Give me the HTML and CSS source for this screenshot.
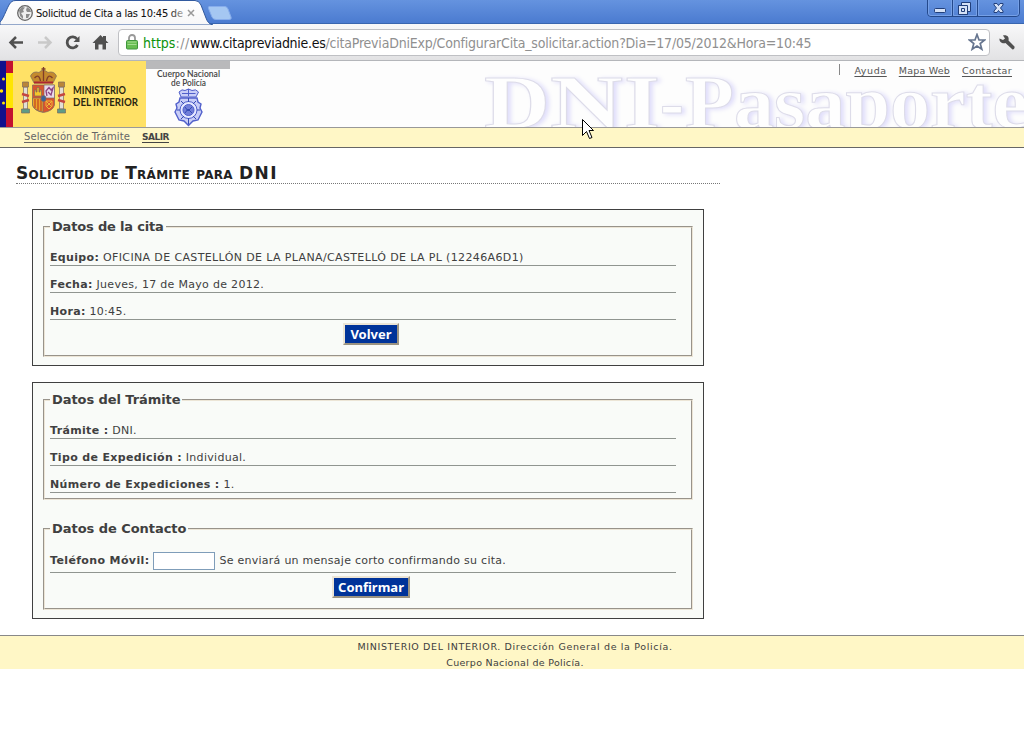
FILE: index.html
```html
<!DOCTYPE html>
<html lang="es">
<head>
<meta charset="utf-8">
<title>Solicitud de Cita a las 10:45</title>
<link rel="stylesheet" href="styles.css">
</head>
<body>
<div class="tabstrip">
  <svg class="tabs" width="240" height="25" viewBox="0 0 240 25">
    <defs>
      <linearGradient id="tabfill" x2="0" y2="1"><stop stop-color="#fff"/><stop offset="1" stop-color="#f7f7f8"/></linearGradient>
      <linearGradient id="fade" x1="170" x2="184" gradientUnits="userSpaceOnUse"><stop stop-color="#111"/><stop offset="1" stop-color="#bbb"/></linearGradient>
    </defs>
    <path d="M0 25V22C4 19 8 3 12 1.500Q13 .5 16 .5H195Q199 .5 201 5L206 18Q208 24 213 25Z" fill="url(#tabfill)" stroke="#31599e"/>
    <path d="M209 6.500H225Q227 6.500 228 9L231 17Q232 19.500 229 19.500H216Q213 19.500 212 17L208.500 8.500Q208 6.500 209 6.500Z" fill="#a5c7f2" stroke="#87adec"/>
    <circle cx="25" cy="13" r="7.300" fill="#eee" stroke="#666" stroke-width="1.300"/>
    <path d="M19 10L22 7 25 7.500 23 10 24 12 21 13 23 16 23 19 20 16ZM27 7L30 9 31 12 27 12 26 10ZM26 14L30 14 28 18 26 18Z" fill="#8c8c8c"/>
    <text x="36" y="17" class="tab-title" textLength="147" fill="url(#fade)">Solicitud de Cita a las 10:45 de</text>
    <path d="M188 10L194 16M194 10L188 16" stroke="#999" stroke-width="1.500"/>
  </svg>
  <svg class="winbtns" width="94" height="18" viewBox="0 0 94 18">
    <path d="M.5 0V13Q.5 16.500 4 16.500H89Q92.500 16.500 92.500 13V0M25.500 0V16M50.500 0V16" fill="none" stroke="#24498c"/>
    <path d="M1.500 0V13Q1.500 15.500 4 15.500H24.500V0M26.500 0V15.500H49.500V0M51.500 0V15.500H89Q91.500 15.500 91.500 13V0" fill="none" stroke="#76a0e6"/>
    <rect x="7.500" y="8.500" width="11" height="4" rx="1" fill="#d5e1f6" stroke="#213f7b"/>
    <path d="M34.500 2.500H43.500V11.500H40.500V14.500H31.500V5.500H34.500Z" fill="#d5e1f6" stroke="#213f7b"/>
    <path d="M31.500 5.500H40.500V14.500M34.500 8.500H37.500V11.500H34.500Z" fill="none" stroke="#213f7b"/>
    <path d="M67 3.500H70L71.500 5.500 73 3.500H76V5L73.500 8 76 11V12.500H73L71.500 10.500 70 12.500H67V11L69.500 8 67 5Z" fill="#d5e1f6" stroke="#213f7b"/>
  </svg>
</div>
<div class="toolbar">
  <svg class="navicons" width="118" height="36" viewBox="0 24 118 36">
    <g fill="none" stroke-width="2.500">
      <path d="M10.500 42.500H23M16 37L10.500 42.500 16 48" stroke="#505050"/>
      <path d="M38 42.500H50M45 37L50.500 42.500 45 48" stroke="#c9c9c9"/>
      <path d="M77 39A5.500 5.500 0 1 0 77.500 45" stroke="#505050" stroke-width="2.800"/>
    </g>
    <path d="M79.500 36V42H73.500Z" fill="#505050"/>
    <path d="M92.500 43L100.500 35 103 37.500V36H106V40.500L108.500 43H106V49.500H102.500V44.500H98.500V49.500H95V43Z" fill="#505050"/>
  </svg>
  <div class="omnibox">
    <svg width="12" height="16" viewBox="0 0 12 16">
      <path d="M3 7V4A3 3 0 0 1 9 4V7" fill="none" stroke="#999" stroke-width="1.800"/>
      <rect x=".5" y="6.500" width="11" height="8.500" rx="1" fill="#68bd52" stroke="#3f963c"/>
      <path d="M1.500 8H10.500M1.500 10.500H10.500" stroke="#a4dd91"/>
    </svg>
    <div class="url"><span class="scheme">https</span><span class="sep">://</span><span class="host">www.citapreviadnie.es</span><span class="path">/citaPreviaDniExp/ConfigurarCita_solicitar.action?Dia=17/05/2012&amp;Hora=10:45</span></div>
    <svg class="star" width="18" height="18" viewBox="0 0 18 18"><path d="M9 1.500L11 7H16.500L12.200 10.500 13.800 16.200 9 13 4.200 16.200 5.800 10.500 1.500 7H7Z" fill="#fff" stroke="#66758f" stroke-width="1.700"/></svg>
  </div>
  <svg class="wrench" width="18" height="18" viewBox="0 0 18 18"><path d="M1.500 4.500L5 6 7 4.500 5 1.500C9 .5 11.500 3 10.500 6.500L16.500 12.500Q17 15 14.500 15.500L7.500 9C4.500 10 1 8 1.500 4.500Z" fill="#505050"/></svg>
</div>
<header class="banner">
  <svg class="crest" width="146" height="66" viewBox="0 61 146 66">
    <rect y="61" width="146" height="66" fill="#ffe166"/>
    <rect y="61" width="13" height="66" fill="#c3122f"/>
    <rect x="6" y="73" width="7" height="35" fill="#ffe500"/>
    <rect y="61" width="6" height="66" fill="#10108c"/>
    <g fill="#ffe500"><circle cx="3.500" cy="79" r="1.500"/><circle cx="1.500" cy="91" r="1.700"/><circle cx="3.500" cy="103" r="1.500"/></g>
    <g stroke="#7b6a60" stroke-width=".7">
      <path d="M23.500 87H27.500V109H23.500ZM59.500 87H63.500V109H59.500Z" fill="#e3dfd5"/>
      <path d="M22.500 82H28.500V87H22.500ZM58.500 82H64.500V87H58.500Z" fill="#b98539"/>
      <path d="M21.500 109H29.500V113H21.500ZM57.500 109H65.500V113H57.500Z" fill="#5f9b86"/>
      <path d="M22 94L29 96M22 102L29 100M58 96L65 94M58 100L65 102" stroke="#c4473f" stroke-width="2.500"/>
      <path d="M32.500 85H54.500V105Q53 111 43.500 112.500Q34 111 32.500 105Z" fill="#d9542f"/>
      <path d="M44 85H54.500V98H44Z" fill="#e9d8e8"/>
      <path d="M32.500 98H43V112Q33.500 110 32.500 105Z" fill="#eba52b"/>
      <path d="M34.500 96V90H36V92H37V87.500H39V92H40V90H41.500V96Z" fill="#f5c62a"/>
      <path d="M35 99V108M38 99V110M41 99V111" stroke="#c64a20" stroke-width="1.300"/>
      <path d="M47 96L46 91 49 87.500 51 90 53 88 51 95 48 92" stroke="#8b4282" stroke-width="1.300" fill="none"/>
      <path d="M46 101H52V106L49 109 46 106ZM46 101L52 107M52 101L46 107" stroke="#edb838" stroke-width="1" fill="none"/>
      <ellipse cx="43.500" cy="98.500" rx="2.500" ry="3" fill="#3d6399"/>
      <path d="M34 83L30.500 76Q33 70.500 39 72.500Q43 68 48 72.500Q54 70.500 56.500 76L53 83Z" fill="#c48a2e"/>
      <path d="M34 82.500H53" stroke="#ac2630" stroke-width="2"/>
      <path d="M34.500 78Q39 73 40.500 81M46.500 81Q48 73 52.500 78M43.500 67V81M41.500 69H45.500" stroke="#813d28" stroke-width="1.300" fill="none"/>
    </g>
    <text x="73" y="94" class="ministry" textLength="53" lengthAdjust="spacingAndGlyphs">MINISTERIO</text>
    <text x="73" y="106" class="ministry" textLength="65" lengthAdjust="spacingAndGlyphs">DEL INTERIOR</text>
  </svg>
  <svg class="police" width="84" height="66" viewBox="146 61 84 66">
    <rect x="146" y="61" width="84" height="8" fill="#b9b9bb"/>
    <text x="157" y="77" class="corps" textLength="63" lengthAdjust="spacingAndGlyphs">Cuerpo Nacional</text>
    <text x="171" y="86" class="corps" textLength="35" lengthAdjust="spacingAndGlyphs">de Policía</text>
    <g fill="#c9cef7" stroke="#5160cb">
      <path d="M181 97L179 92Q182 88.500 185 90.500Q188.500 87.500 192 90.500Q196 88.500 198.500 92L196 97Z"/>
      <path d="M188.500 89V96M182 93.500H195.500" fill="none"/>
      <path d="M180 98H197L198 102 201 104 200 108 202 112 200 116 198 120 193 121 188.500 125.500 184 121 179 120 177 116 175 112 177 108 176 104 179 102Z" stroke-width="1.400"/>
      <circle cx="188.500" cy="110" r="8.500" fill="#e5e8ff"/>
      <circle cx="188.500" cy="110" r="5.500" fill="#727fd9"/>
      <path d="M185 107L188 111 192 107M185 113L188 109 192 113M181 101L184 104M196 101L193 104M181 119L184 116M196 119L193 116M188.500 98V102M177 110H180M197 110H200M188.500 118V124" fill="none" stroke="#354bb3"/>
    </g>
  </svg>
  <svg class="watermark" width="545" height="66" viewBox="479 61 545 66">
    <g class="ghost">
      <text x="484" y="128" textLength="66" lengthAdjust="spacingAndGlyphs">D</text>
      <text x="550" y="128" textLength="73" lengthAdjust="spacingAndGlyphs">N</text>
      <text x="624" y="128" textLength="36" lengthAdjust="spacingAndGlyphs">I</text>
      <text x="660" y="128" textLength="24" lengthAdjust="spacingAndGlyphs">-</text>
      <text x="685" y="128" textLength="343" lengthAdjust="spacingAndGlyphs">Pasaporte</text>
    </g>
  </svg>
  <nav class="toplinks"><a class="help">Ayuda</a><a class="map">Mapa Web</a><a class="reach">Contactar</a></nav>
</header>
<nav class="menu"><a class="select">Selección de Trámite</a><a class="exit">SALIR</a></nav>
<main>
  <h1>Solicitud de Trámite para <span>DNI</span></h1>
  <section class="box">
    <fieldset class="appointment">
      <legend class="l1">Datos de la cita</legend>
      <div class="row"><b>Equipo:</b> <span class="office">OFICINA DE CASTELLÓN DE LA PLANA/CASTELLÓ DE LA PL (12246A6D1)</span></div>
      <div class="row"><b>Fecha:</b> <span>Jueves, 17 de Mayo de 2012.</span></div>
      <div class="row"><b>Hora:</b> <span>10:45.</span></div>
      <button class="back">Volver</button>
    </fieldset>
  </section>
  <section class="box">
    <fieldset class="procedure">
      <legend class="l2">Datos del Trámite</legend>
      <div class="row"><b>Trámite :</b> <span>DNI.</span></div>
      <div class="row"><b>Tipo de Expedición :</b> <span>Individual.</span></div>
      <div class="row"><b>Número de Expediciones :</b> <span>1.</span></div>
    </fieldset>
    <fieldset class="contact">
      <legend class="l3">Datos de Contacto</legend>
      <div class="row phone"><b>Teléfono Móvil:</b><input type="text"><span>Se enviará un mensaje corto confirmando su cita.</span></div>
      <button class="confirm">Confirmar</button>
    </fieldset>
  </section>
</main>
<footer><div class="f1">MINISTERIO DEL INTERIOR. Dirección General de la Policía.</div><div class="f2">Cuerpo Nacional de Policía.</div></footer>
<svg class="cursor" width="13" height="22" viewBox="0 0 13 22"><path d="M.5 .5V16.500L4.500 12.500 7.500 19.500 10 18.500 7 11.500H11.500Z" fill="#fff" stroke="#000"/></svg>
</body>
</html>
```
FILE: styles.css
```css
* { box-sizing: border-box; }
body { margin: 0; width: 1024px; height: 738px; overflow: hidden; background: #fff; color: #404040; font: 11px/14px "DejaVu Sans", Verdana, sans-serif; }
svg { display: block; flex: none; }
.tabstrip { height: 24px; display: flex; justify-content: space-between; background: linear-gradient(#6593df, #4b7bd0); padding-right: 3px; border-bottom: 1px solid #3966af; }
.tab-title { font: 11px "DejaVu Sans Condensed", "DejaVu Sans", sans-serif; }
.toolbar { height: 37px; display: flex; background: linear-gradient(#f8f8f9, #e2e2e4); border-bottom: 1px solid #b4b6ba; }
.omnibox { width: 872px; height: 27px; margin-top: 5px; border: 1px solid #bfc0c4; border-radius: 4px; background: #fff; display: flex; align-items: center; padding: 0 3px 1px 7px; }
.url { flex: 1; display: flex; margin-left: 5px; padding-top: 1px; font: 14px/20px "DejaVu Sans Condensed", "DejaVu Sans", sans-serif; white-space: nowrap; }
.scheme { color: #0b920b; }
.sep { color: #909090; letter-spacing: .6px; }
.host { color: #111; letter-spacing: -.29px; }
.path { color: #909090; letter-spacing: -.2px; }
.wrench { margin: 10px 0 0 8px; }
.banner { position: relative; height: 67px; display: flex; background: #fdfdfd; border-bottom: 1px solid #999; }
.watermark { margin-left: auto; }
.ministry { font: bold 11px Lato, sans-serif; fill: #2b2710; }
.corps { font: 600 9px Lato, sans-serif; fill: #444; }
.ghost { font: bold 76px "Liberation Serif", serif; fill: #fefefe; stroke: #dddce9; stroke-width: 1px; filter: drop-shadow(3px 1px 2px #dfddfa); }
.toplinks { position: absolute; top: 3px; right: 12px; display: flex; gap: 12px; border-left: 1px solid #888; padding-left: 14px; height: 11px; font-size: 9.500px; line-height: 13px; color: #555; }
.help { letter-spacing: .6px; }
.map { letter-spacing: .2px; }
.reach { letter-spacing: .37px; }
.toplinks a, .menu a { text-decoration: underline; text-underline-offset: 2px; }
.menu { height: 20px; display: flex; gap: 12px; padding-left: 24px; background: #fff7c6; border-bottom: 1px solid #666; line-height: 18px; font-size: 10px; color: #666; letter-spacing: .1px; }
.menu .exit { color: #444; font-weight: bold; font-size: 9px; letter-spacing: -.5px; }
main { width: 720px; padding: 15px 0 0 16px; }
h1 { margin: 0; height: 21px; border-bottom: 1px dotted #777; color: #222; font-size: 17px; line-height: 20px; font-variant: small-caps; letter-spacing: .27px; }
h1 span { letter-spacing: 1.400px; }
.box { width: 672px; margin: 25px 0 0 16px; border: 1px solid #404040; background: #f9fbf8; padding: 8px 10px 8px; }
.box + .box { margin-top: 16px; }
fieldset { margin: 0; padding: 0 15px 0 5px; border: 2px groove #ece5d6; min-width: 0; display: block; }
.appointment { height: 139px; }
.procedure { height: 109px; }
.contact { height: 90px; margin-top: 20px; }
legend { padding: 0 2px; height: 18px; font-size: 13px; line-height: 18px; font-weight: bold; }
.l1 { letter-spacing: -.18px; }
.l2 { letter-spacing: -.08px; }
.l3 { letter-spacing: -.05px; }
.row { height: 27px; padding-top: 11px; border-bottom: 1px solid #909590; letter-spacing: .3px; white-space: nowrap; line-height: 16px; }
.row b { letter-spacing: .34px; }
.row .office { letter-spacing: .37px; }
legend + .row { height: 30px; padding-top: 14px; }
button { display: block; height: 22px; border: 2px solid; border-color: #ece5d6 #9b9381 #9b9381 #ece5d6; background: #039; color: #fff; font: bold 13px/17px "Noto Sans", sans-serif; padding: 0; }
.back { width: 56px; margin: 3px auto 0; transform: translateX(8px); }
.confirm { width: 78px; margin: 3px auto 0; transform: translateX(8px); }
legend + .phone { display: flex; height: 35px; padding-top: 14px; line-height: 17px; letter-spacing: .26px; }
.phone b { letter-spacing: .37px; }
.phone input { appearance: none; width: 62px; height: 18px; margin: 0 4px; border: 1px solid #7f9db9; padding: 0; background: #fff; }
footer { margin-top: 16px; height: 34px; padding-top: 3px; border-top: 1px solid #888; background: #fff7c6; text-align: center; font-size: 9.500px; line-height: 16px; padding-left: 6px; }
.f1 { letter-spacing: .64px; }
.f2 { letter-spacing: .3px; }
.cursor { position: absolute; left: 582px; top: 119px; }
```
